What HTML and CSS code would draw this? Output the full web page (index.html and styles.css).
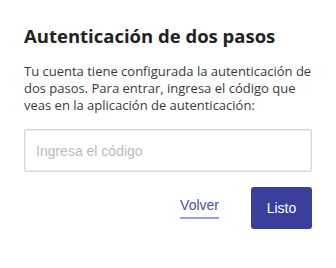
FILE: index.html
```html
<!DOCTYPE html>
<html>
<head>
  <meta charset="utf-8">
  <title>Autenticación de dos pasos</title>
  <link rel="stylesheet" href="styles.css">
</head>
<body>
  <div class="content">
    <h1>Autenticación de dos pasos</h1>
    <p class="intro">Tu cuenta tiene configurada la autenticación de dos pasos. Para entrar, ingresa el código que veas en la aplicación de autenticación:</p>

    <form class="codeform">
      <input type="text" name="code" placeholder="Ingresa el código" autocomplete="off">
      <div class="actions">
        <a href="#" class="back">Volver</a>
        <button type="button" class="button">Listo</button>
      </div>
    </form>
  </div>
</body>
</html>
```

FILE: styles.css
```css
body {
  margin: 0;
  background: #FFF;
  color: #333;
  font-family: "Open Sans", sans-serif;
}

.content {
  padding: 24px 24px 0;
}

h1 {
  margin: 0;
  font-size: 18.5px;
  line-height: 24px;
  font-weight: 700;
  color: #222;
}

.intro {
  margin: 15px 0 0;
  font-size: 13px;
  line-height: 17px;
  color: #3A3A3A;
}

.codeform input {
  display: block;
  box-sizing: border-box;
  width: 100%;
  height: 43px;
  margin: 15px 0 0;
  padding: 0 11px;
  border: 1px solid #D6D6D6;
  border-radius: 2px;
  box-shadow: inset 0 0 0 1px #EEE;
  font-family: "Liberation Sans", Arial, sans-serif;
  font-size: 14px;
  color: #333;
  outline: 0;
}

.codeform input::placeholder {
  color: #BBB;
}

.actions {
  display: flex;
  justify-content: flex-end;
  align-items: center;
  gap: 32px;
  margin-top: 15px;
}

.back {
  font-family: "Liberation Sans", Arial, sans-serif;
  font-size: 14px;
  color: #4A4FA8;
  text-decoration: none;
  padding-bottom: 4px;
  border-bottom: 2px solid #9A9EDB;
}

.button {
  width: 61px;
  height: 42px;
  border: 0;
  border-radius: 3px;
  background: #3A3F9B;
  color: #FFF;
  font-family: "Liberation Sans", Arial, sans-serif;
  font-size: 14px;
  cursor: pointer;
}
```
